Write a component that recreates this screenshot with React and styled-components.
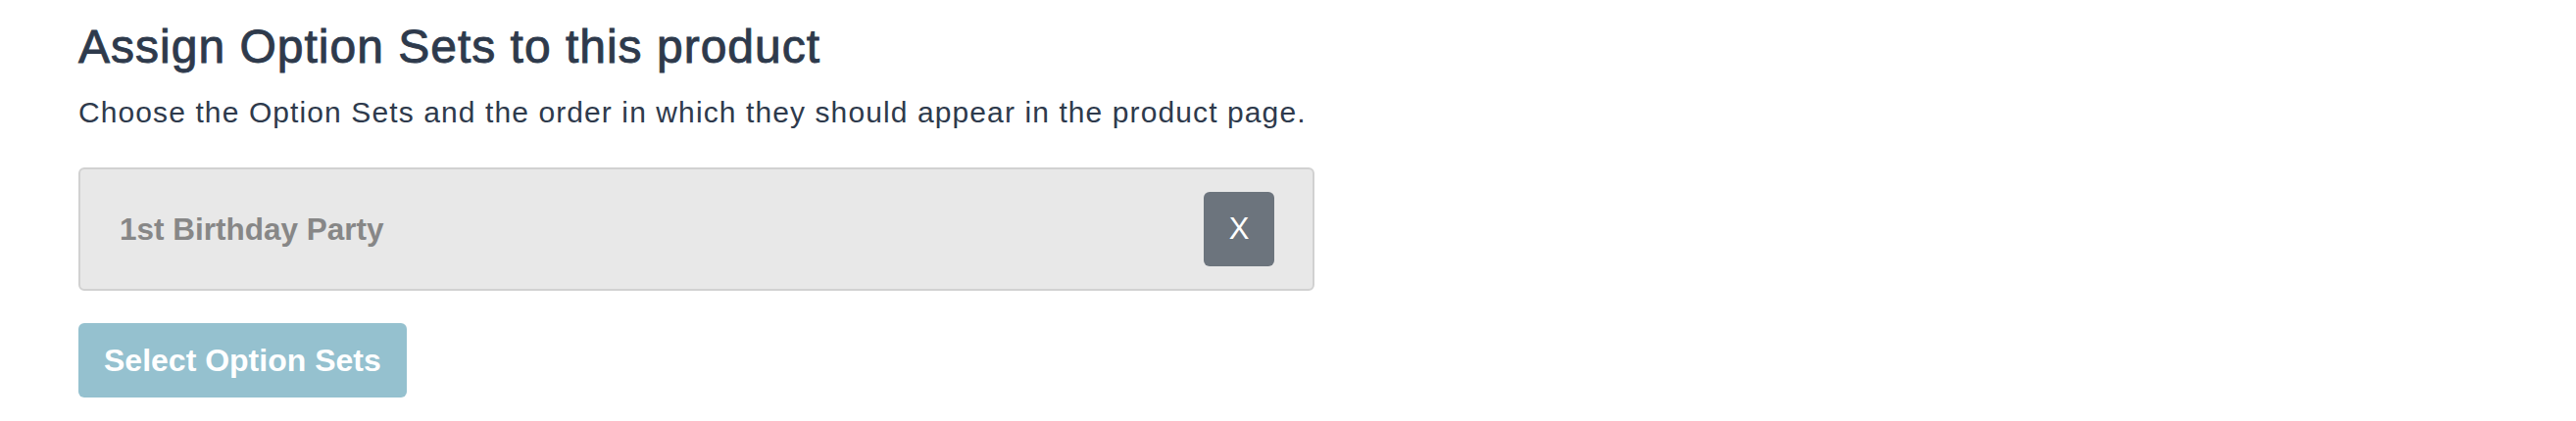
import React from 'react';
import styled, { createGlobalStyle } from 'styled-components';

const GlobalStyle = createGlobalStyle`
  body {
    margin: 0;
    background: #ffffff;
    font-family: 'Liberation Sans', Arial, Helvetica, sans-serif;
  }
`;

const Page = styled.div`
  padding: 20px 80px 0 80px;
  width: 1261px;
`;

const Heading = styled.h2`
  margin: 0;
  font-size: 48px;
  line-height: 56px;
  font-weight: 400;
  letter-spacing: 1px;
  -webkit-text-stroke: 0.9px #2e3a4c;
  color: #2e3a4c;
`;

const Subtitle = styled.p`
  margin: 19px 0 0 0;
  font-size: 30px;
  line-height: 40px;
  letter-spacing: 1.1px;
  color: #2e3a4c;
`;

const SetList = styled.div`
  margin-top: 36px;
  display: flex;
  flex-direction: column;
  gap: 12px;
`;

const SetRow = styled.div`
  display: flex;
  align-items: center;
  justify-content: space-between;
  padding: 23px 39px 23px 40px;
  background: #e8e8e8;
  border: 2px solid #d1d1d1;
  border-radius: 6px;
`;

const SetName = styled.span`
  font-size: 31.5px;
  font-weight: 700;
  color: #878787;
`;

const RemoveButton = styled.button`
  width: 72px;
  height: 76px;
  border: none;
  border-radius: 6px;
  background: #6c747d;
  color: #ffffff;
  font-family: inherit;
  font-size: 31px;
  font-weight: 400;
  padding: 0;
  cursor: pointer;
`;

const SelectButton = styled.button`
  margin-top: 33px;
  height: 76px;
  padding: 0 26px;
  border: none;
  border-radius: 6px;
  background: #95c1cf;
  color: #ffffff;
  font-family: inherit;
  font-size: 32px;
  font-weight: 700;
  cursor: pointer;
`;

const optionSets = [{ id: 1, name: '1st Birthday Party' }];

export default function App() {
  return (
    <Page>
      <GlobalStyle />
      <Heading>Assign Option Sets to this product</Heading>
      <Subtitle>
        Choose the Option Sets and the order in which they should appear in the product page.
      </Subtitle>
      <SetList>
        {optionSets.map(set => (
          <SetRow key={set.id}>
            <SetName>{set.name}</SetName>
            <RemoveButton>X</RemoveButton>
          </SetRow>
        ))}
      </SetList>
      <SelectButton>Select Option Sets</SelectButton>
    </Page>
  );
}
